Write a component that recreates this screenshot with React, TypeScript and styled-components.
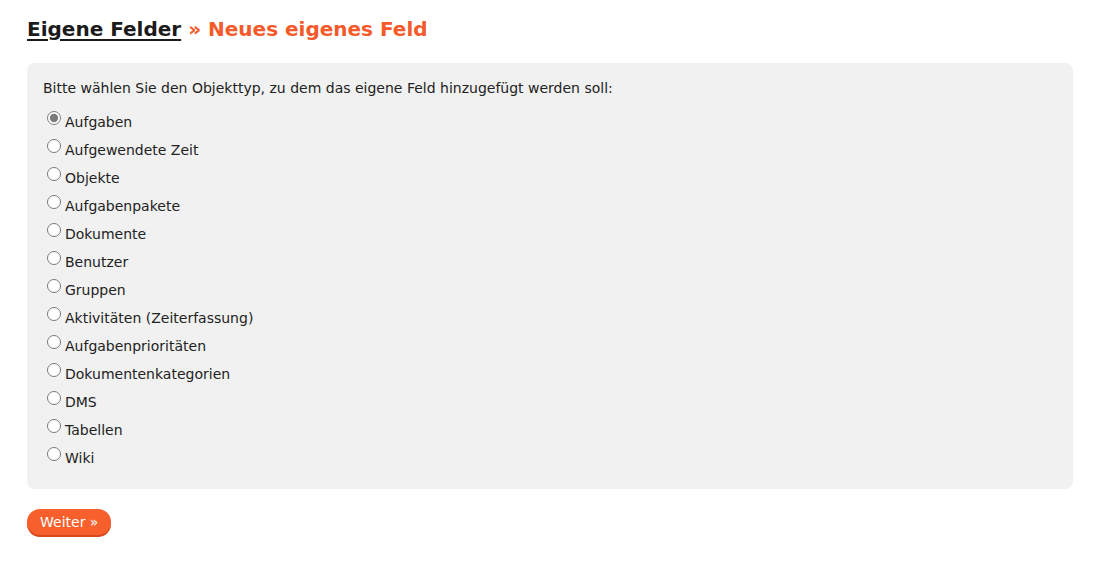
import React, { useState } from "react";
import styled, { createGlobalStyle } from "styled-components";

const GlobalStyle = createGlobalStyle`
  body {
    margin: 0;
    background: #fff;
    font-family: "DejaVu Sans", Verdana, sans-serif;
    color: #222;
  }
`;

const Page = styled.div`
  padding: 17px 29px 24px 27px;
`;

const Title = styled.h1`
  margin: 0 0 22px;
  font-size: 20px;
  line-height: 24px;
  font-weight: bold;
  color: #f55a2a;
`;

const TitleLink = styled.a`
  color: #1b1b1b;
  text-decoration: underline;
  text-underline-offset: 3px;
  text-decoration-thickness: 2px;
`;

const Panel = styled.form`
  background: #f1f1f1;
  border-radius: 8px;
  padding: 15px 16px 17px;
`;

const Intro = styled.p`
  margin: 0 0 10px;
  font-size: 14px;
  line-height: 20px;
`;

const Option = styled.label`
  display: block;
  font-size: 14px;
  line-height: 28px;
  cursor: pointer;
`;

const Radio = styled.input`
  width: 14px;
  height: 14px;
  margin: 0 4px 0 4px;
  vertical-align: 2px;
  accent-color: #7c7c7c;
`;

const Btn = styled.button`
  margin-top: 20px;
  padding: 0 13px;
  height: 26px;
  border: none;
  border-radius: 13px;
  background: #f75f2d;
  box-shadow: 0 2px 0 #d6471b;
  color: #fff;
  font-family: inherit;
  font-size: 14px;
  cursor: pointer;
`;

const types = [
  "Aufgaben",
  "Aufgewendete Zeit",
  "Objekte",
  "Aufgabenpakete",
  "Dokumente",
  "Benutzer",
  "Gruppen",
  "Aktivitäten (Zeiterfassung)",
  "Aufgabenprioritäten",
  "Dokumentenkategorien",
  "DMS",
  "Tabellen",
  "Wiki",
];

export default function App() {
  const [type, setType] = useState("Aufgaben");

  return (
    <Page>
      <GlobalStyle />
      <Title>
        <TitleLink href="#">Eigene Felder</TitleLink> » Neues eigenes Feld
      </Title>
      <Panel>
        <Intro>
          Bitte wählen Sie den Objekttyp, zu dem das eigene Feld hinzugefügt werden soll:
        </Intro>
        {types.map((t) => (
          <Option key={t}>
            <Radio
              type="radio"
              name="type"
              value={t}
              checked={type === t}
              onChange={() => setType(t)}
            />
            {t}
          </Option>
        ))}
      </Panel>
      <Btn type="button">Weiter »</Btn>
    </Page>
  );
}
